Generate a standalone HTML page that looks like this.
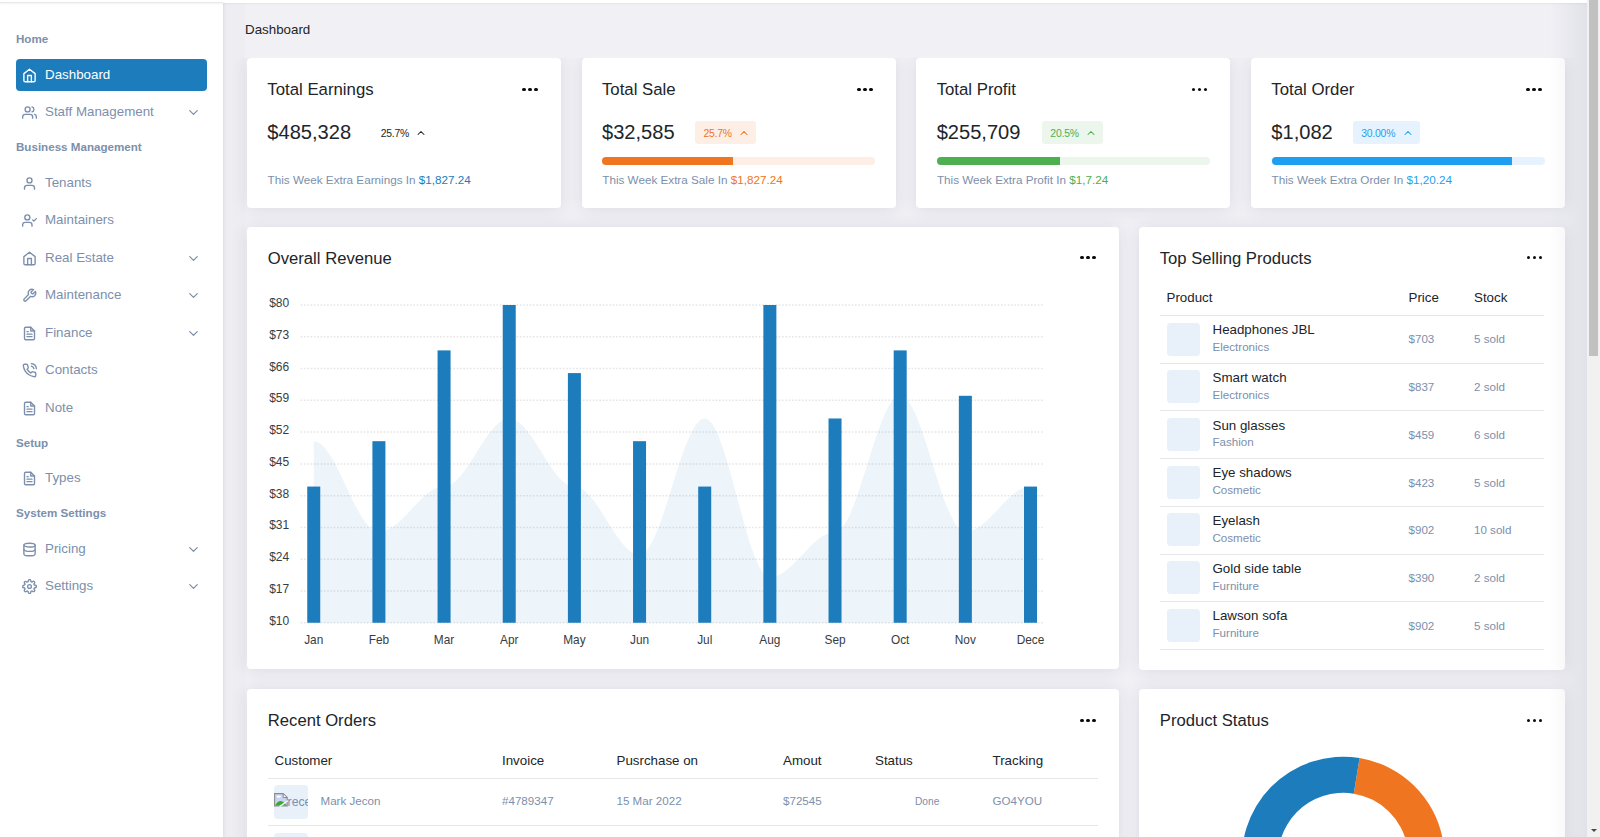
<!DOCTYPE html>
<html lang="en">
<head>
<meta charset="utf-8">
<title>Dashboard</title>
<style>
*{box-sizing:border-box;margin:0;padding:0}
html,body{width:1600px;height:837px;overflow:hidden}
body{background:#f0f0f5;font-family:"Liberation Sans",Arial,sans-serif;color:#2a3547;position:relative;-webkit-font-smoothing:antialiased}
svg{display:block}
.abs{position:absolute}

/* top strip */
#topbar{position:absolute;left:0;top:0;width:1600px;height:3px;background:#fff;box-shadow:0 1px 2px rgba(0,0,0,.05);z-index:5}

/* sidebar */
#sidebar{position:absolute;left:0;top:0;width:223.3px;height:837px;background:#fff;box-shadow:1px 0 3px rgba(60,60,90,.10);z-index:4}
#topline{position:absolute;left:0;top:2.2px;width:223.3px;height:1px;background:#e9e9e9;z-index:6}
.sec{position:absolute;left:16px;font-size:11.6px;font-weight:700;color:#7c8fac;line-height:14px;white-space:nowrap}
.nav{position:absolute;left:16px;width:191px;height:31.5px;border-radius:4px;color:#7c8fac;font-size:13.35px;line-height:31.5px;white-space:nowrap}
.nav.active{background:#1c7cbc;color:#fff}
.nav svg.ic{position:absolute;left:5.6px;top:8.7px;width:15px;height:15px;fill:none;stroke:currentColor;stroke-width:2.2;stroke-linecap:round;stroke-linejoin:round}
.nav span{position:absolute;left:29px;top:0}
.nav svg.chev{position:absolute;left:170.3px;top:8.9px;width:15px;height:15px;fill:none;stroke:currentColor;stroke-width:2;stroke-linecap:round;stroke-linejoin:round}

/* main */
#lband{position:absolute;left:223px;top:3px;width:22px;height:834px;background:rgba(0,0,30,.01)}
#crumb{position:absolute;left:245px;top:22px;font-size:13.35px;line-height:16px;color:#212529}
.card{position:absolute;background:#fff;border-radius:4px;box-shadow:0 1px 17px rgba(40,45,58,.10)}
.ctitle{position:absolute;left:20.3px;font-size:16.8px;line-height:20px;color:#212529;white-space:nowrap}
#rev .ctitle,#top .ctitle,#orders .ctitle,#status .ctitle{font-size:16.65px;left:20.8px}
.dots{position:absolute;width:16px;height:4px}
.dots i{position:absolute;top:0;width:3.5px;height:3.5px;border-radius:50%;background:#0b0b0b}
.dots i:nth-child(1){left:.2px}.dots i:nth-child(2){left:6.2px}.dots i:nth-child(3){left:12.2px}

.stat{clip-path:inset(0 -40px -40px -40px)}
.stat .val{position:absolute;left:20.3px;top:61.6px;font-size:20.1px;line-height:24px;color:#212529;white-space:nowrap}
.stat .badge{position:absolute;top:63px;height:23px;border-radius:3px;font-size:10.4px;line-height:25px;padding-left:8.2px;white-space:nowrap;letter-spacing:-.2px}
.stat .badge svg{position:absolute;top:5.6px;width:12px;height:12px;fill:none;stroke:currentColor;stroke-width:2.1;stroke-linecap:round;stroke-linejoin:round}
.stat .bar{position:absolute;left:20.5px;top:99px;width:273px;height:8px;border-radius:4px;overflow:hidden}
.stat .bar b{position:absolute;left:0;top:0;height:8px;display:block}
.stat .foot{position:absolute;left:20.6px;top:114.5px;font-size:11.7px;line-height:14px;color:#7c8fac;white-space:nowrap}


/* tables */
.th{position:absolute;font-size:13.33px;line-height:16px;color:#212529;white-space:nowrap}
.hr{position:absolute;left:21px;height:1px;background:#e7e7e9}
.thumb{position:absolute;width:33px;height:33px;border-radius:3.5px;background:#e8f1f9;overflow:hidden}
.pn{position:absolute;left:73.5px;font-size:13.33px;line-height:16px;color:#212529;white-space:nowrap}
.pc{position:absolute;left:73.5px;font-size:11.6px;line-height:14px;color:#7c8fac;white-space:nowrap}
.td{position:absolute;font-size:11.6px;line-height:14px;color:#7c8fac;white-space:nowrap}
/* scrollbar */
#sb{position:absolute;left:1587.4px;top:0;width:12.6px;height:837px;background:#f1f1f1;z-index:10}
#sb .thumbv{position:absolute;left:1.7px;top:0;width:8.9px;height:356px;background:#c1c1c1}
#sb .arr{position:absolute;left:3.8px;top:828.7px;width:0;height:0;border-left:3px solid transparent;border-right:3px solid transparent;border-top:3.5px solid #4a4a4a}
#rshade{position:absolute;left:1549px;top:3px;width:38.5px;height:834px;background:linear-gradient(to right,rgba(30,40,50,0),rgba(30,40,50,.07));z-index:9;pointer-events:none}
</style>
</head>
<body>
<div id="topbar"></div>
<div id="topline"></div>

<div id="sidebar">
  <div class="sec" style="top:32px">Home</div>
  <div class="nav active" style="top:59px">
    <svg class="ic" viewBox="0 0 24 24"><path d="M3 9l9-7 9 7v11a2 2 0 0 1-2 2H5a2 2 0 0 1-2-2z"/><polyline points="9 22 9 12 15 12 15 22"/></svg>
    <span>Dashboard</span>
  </div>
  <div class="nav" style="top:96px">
    <svg class="ic" viewBox="0 0 24 24"><path d="M17 21v-2a4 4 0 0 0-4-4H5a4 4 0 0 0-4 4v2"/><circle cx="9" cy="7" r="4"/><path d="M23 21v-2a4 4 0 0 0-3-3.87"/><path d="M16 3.13a4 4 0 0 1 0 7.75"/></svg>
    <span>Staff Management</span>
    <svg class="chev" viewBox="0 0 24 24"><polyline points="6 9 12 15 18 9"/></svg>
  </div>
  <div class="sec" style="top:140px">Business Management</div>
  <div class="nav" style="top:167px">
    <svg class="ic" viewBox="0 0 24 24"><path d="M20 21v-2a4 4 0 0 0-4-4H8a4 4 0 0 0-4 4v2"/><circle cx="12" cy="7" r="4"/></svg>
    <span>Tenants</span>
  </div>
  <div class="nav" style="top:204px">
    <svg class="ic" viewBox="0 0 24 24"><path d="M16 21v-2a4 4 0 0 0-4-4H5a4 4 0 0 0-4 4v2"/><circle cx="8.5" cy="7" r="4"/><polyline points="17 11 19 13 23 9"/></svg>
    <span>Maintainers</span>
  </div>
  <div class="nav" style="top:242px">
    <svg class="ic" viewBox="0 0 24 24"><path d="M3 9l9-7 9 7v11a2 2 0 0 1-2 2H5a2 2 0 0 1-2-2z"/><polyline points="9 22 9 12 15 12 15 22"/></svg>
    <span>Real Estate</span>
    <svg class="chev" viewBox="0 0 24 24"><polyline points="6 9 12 15 18 9"/></svg>
  </div>
  <div class="nav" style="top:279px">
    <svg class="ic" viewBox="0 0 24 24"><path d="M14.7 6.3a1 1 0 0 0 0 1.4l1.6 1.6a1 1 0 0 0 1.4 0l3.77-3.77a6 6 0 0 1-7.94 7.94l-6.91 6.91a2.12 2.12 0 0 1-3-3l6.91-6.91a6 6 0 0 1 7.94-7.94l-3.76 3.76z"/></svg>
    <span>Maintenance</span>
    <svg class="chev" viewBox="0 0 24 24"><polyline points="6 9 12 15 18 9"/></svg>
  </div>
  <div class="nav" style="top:317px">
    <svg class="ic" viewBox="0 0 24 24"><path d="M14 2H6a2 2 0 0 0-2 2v16a2 2 0 0 0 2 2h12a2 2 0 0 0 2-2V8z"/><polyline points="14 2 14 8 20 8"/><line x1="16" y1="13" x2="8" y2="13"/><line x1="16" y1="17" x2="8" y2="17"/><polyline points="10 9 9 9 8 9"/></svg>
    <span>Finance</span>
    <svg class="chev" viewBox="0 0 24 24"><polyline points="6 9 12 15 18 9"/></svg>
  </div>
  <div class="nav" style="top:354px">
    <svg class="ic" viewBox="0 0 24 24"><path d="M15.05 5A5 5 0 0 1 19 8.95M15.05 1A9 9 0 0 1 23 8.94m-1 7.98v3a2 2 0 0 1-2.18 2 19.79 19.79 0 0 1-8.63-3.07 19.5 19.5 0 0 1-6-6 19.79 19.79 0 0 1-3.07-8.67A2 2 0 0 1 4.11 2h3a2 2 0 0 1 2 1.72 12.84 12.84 0 0 0 .7 2.81 2 2 0 0 1-.45 2.11L8.09 9.91a16 16 0 0 0 6 6l1.27-1.27a2 2 0 0 1 2.11-.45 12.84 12.84 0 0 0 2.81.7A2 2 0 0 1 22 16.92z"/></svg>
    <span>Contacts</span>
  </div>
  <div class="nav" style="top:392px">
    <svg class="ic" viewBox="0 0 24 24"><path d="M14 2H6a2 2 0 0 0-2 2v16a2 2 0 0 0 2 2h12a2 2 0 0 0 2-2V8z"/><polyline points="14 2 14 8 20 8"/><line x1="16" y1="13" x2="8" y2="13"/><line x1="16" y1="17" x2="8" y2="17"/><polyline points="10 9 9 9 8 9"/></svg>
    <span>Note</span>
  </div>
  <div class="sec" style="top:436px">Setup</div>
  <div class="nav" style="top:462px">
    <svg class="ic" viewBox="0 0 24 24"><path d="M14 2H6a2 2 0 0 0-2 2v16a2 2 0 0 0 2 2h12a2 2 0 0 0 2-2V8z"/><polyline points="14 2 14 8 20 8"/><line x1="16" y1="13" x2="8" y2="13"/><line x1="16" y1="17" x2="8" y2="17"/><polyline points="10 9 9 9 8 9"/></svg>
    <span>Types</span>
  </div>
  <div class="sec" style="top:506px">System Settings</div>
  <div class="nav" style="top:533px">
    <svg class="ic" viewBox="0 0 24 24"><ellipse cx="12" cy="5" rx="9" ry="3"/><path d="M21 12c0 1.66-4 3-9 3s-9-1.34-9-3"/><path d="M3 5v14c0 1.66 4 3 9 3s9-1.34 9-3V5"/></svg>
    <span>Pricing</span>
    <svg class="chev" viewBox="0 0 24 24"><polyline points="6 9 12 15 18 9"/></svg>
  </div>
  <div class="nav" style="top:570px">
    <svg class="ic" viewBox="0 0 24 24"><circle cx="12" cy="12" r="3"/><path d="M19.4 15a1.65 1.65 0 0 0 .33 1.82l.06.06a2 2 0 0 1 0 2.83 2 2 0 0 1-2.83 0l-.06-.06a1.65 1.65 0 0 0-1.82-.33 1.65 1.65 0 0 0-1 1.51V21a2 2 0 0 1-2 2 2 2 0 0 1-2-2v-.09A1.65 1.65 0 0 0 9 19.4a1.65 1.65 0 0 0-1.82.33l-.06.06a2 2 0 0 1-2.83 0 2 2 0 0 1 0-2.83l.06-.06a1.65 1.65 0 0 0 .33-1.82 1.65 1.65 0 0 0-1.51-1H3a2 2 0 0 1-2-2 2 2 0 0 1 2-2h.09A1.65 1.65 0 0 0 4.6 9a1.65 1.65 0 0 0-.33-1.82l-.06-.06a2 2 0 0 1 0-2.83 2 2 0 0 1 2.83 0l.06.06a1.65 1.65 0 0 0 1.82.33H9a1.65 1.65 0 0 0 1-1.51V3a2 2 0 0 1 2-2 2 2 0 0 1 2 2v.09a1.65 1.65 0 0 0 1 1.51 1.65 1.65 0 0 0 1.82-.33l.06-.06a2 2 0 0 1 2.83 0 2 2 0 0 1 0 2.83l-.06.06a1.65 1.65 0 0 0-.33 1.82V9a1.65 1.65 0 0 0 1.51 1H21a2 2 0 0 1 2 2 2 2 0 0 1-2 2h-.09a1.65 1.65 0 0 0-1.51 1z"/></svg>
    <span>Settings</span>
    <svg class="chev" viewBox="0 0 24 24"><polyline points="6 9 12 15 18 9"/></svg>
  </div>
</div>

<div id="lband"></div>
<div id="crumb">Dashboard</div>

<!-- STAT CARDS -->
<div class="card stat" style="left:247px;top:58px;width:314px;height:150px">
  <div class="ctitle" style="top:22px">Total Earnings</div>
  <div class="dots" style="left:275.2px;top:29.5px"><i></i><i></i><i></i></div>
  <div class="val">$485,328</div>
  <div class="badge" style="left:125.5px;width:60px;color:#212529">25.7%<svg style="left:42.4px" viewBox="0 0 24 24"><polyline points="18 15 12 9 6 15"/></svg></div>
  <div class="foot">This Week Extra Earnings In <span style="color:#1c7cbc">$1,827.24</span></div>
</div>
<div class="card stat" style="left:581.67px;top:58px;width:314px;height:150px">
  <div class="ctitle" style="top:22px">Total Sale</div>
  <div class="dots" style="left:275.2px;top:29.5px"><i></i><i></i><i></i></div>
  <div class="val">$32,585</div>
  <div class="badge" style="left:113.6px;width:60.75px;background:#fdefe6;color:#f07521">25.7%<svg style="left:43.2px" viewBox="0 0 24 24"><polyline points="18 15 12 9 6 15"/></svg></div>
  <div class="bar" style="background:#fdefe6"><b style="width:130.8px;background:#f07521"></b></div>
  <div class="foot">This Week Extra Sale In <span style="color:#f07521">$1,827.24</span></div>
</div>
<div class="card stat" style="left:916.33px;top:58px;width:314px;height:150px">
  <div class="ctitle" style="top:22px">Total Profit</div>
  <div class="dots" style="left:275.2px;top:29.5px"><i></i><i></i><i></i></div>
  <div class="val">$255,709</div>
  <div class="badge" style="left:125.8px;width:60.5px;background:#ecf6ed;color:#4caf50">20.5%<svg style="left:43px" viewBox="0 0 24 24"><polyline points="18 15 12 9 6 15"/></svg></div>
  <div class="bar" style="background:#ecf6ed"><b style="width:122.8px;background:#4caf50"></b></div>
  <div class="foot">This Week Extra Profit In <span style="color:#4caf50">$1,7.24</span></div>
</div>
<div class="card stat" style="left:1251px;top:58px;width:314px;height:150px">
  <div class="ctitle" style="top:22px">Total Order</div>
  <div class="dots" style="left:275.2px;top:29.5px"><i></i><i></i><i></i></div>
  <div class="val">$1,082</div>
  <div class="badge" style="left:102px;width:67px;background:#e6f3fe;color:#1e9ff2">30.00%<svg style="left:49px" viewBox="0 0 24 24"><polyline points="18 15 12 9 6 15"/></svg></div>
  <div class="bar" style="background:#e6f3fe"><b style="width:240px;background:#1e9ff2"></b></div>
  <div class="foot">This Week Extra Order In <span style="color:#1e9ff2">$1,20.24</span></div>
</div>

<!-- OVERALL REVENUE -->
<div class="card" id="rev" style="left:247px;top:227px;width:872px;height:442px">
  <div class="ctitle" style="top:22px">Overall Revenue</div>
  <div class="dots" style="left:833.2px;top:28.7px"><i></i><i></i><i></i></div>
  <svg id="chart" class="abs" style="left:0;top:0" width="872" height="441" viewBox="0 0 872 441" font-family="Liberation Sans, Arial, sans-serif"><!--CHART-->
<line x1="53.60" y1="395.75" x2="796.60" y2="395.75" stroke="#e6e6e6" stroke-width="1.5" stroke-dasharray="1.66 1.66"/>
<line x1="53.60" y1="363.98" x2="796.60" y2="363.98" stroke="#e6e6e6" stroke-width="1.5" stroke-dasharray="1.66 1.66"/>
<line x1="53.60" y1="332.20" x2="796.60" y2="332.20" stroke="#e6e6e6" stroke-width="1.5" stroke-dasharray="1.66 1.66"/>
<line x1="53.60" y1="300.42" x2="796.60" y2="300.42" stroke="#e6e6e6" stroke-width="1.5" stroke-dasharray="1.66 1.66"/>
<line x1="53.60" y1="268.65" x2="796.60" y2="268.65" stroke="#e6e6e6" stroke-width="1.5" stroke-dasharray="1.66 1.66"/>
<line x1="53.60" y1="236.88" x2="796.60" y2="236.88" stroke="#e6e6e6" stroke-width="1.5" stroke-dasharray="1.66 1.66"/>
<line x1="53.60" y1="205.10" x2="796.60" y2="205.10" stroke="#e6e6e6" stroke-width="1.5" stroke-dasharray="1.66 1.66"/>
<line x1="53.60" y1="173.32" x2="796.60" y2="173.32" stroke="#e6e6e6" stroke-width="1.5" stroke-dasharray="1.66 1.66"/>
<line x1="53.60" y1="141.55" x2="796.60" y2="141.55" stroke="#e6e6e6" stroke-width="1.5" stroke-dasharray="1.66 1.66"/>
<line x1="53.60" y1="109.77" x2="796.60" y2="109.77" stroke="#e6e6e6" stroke-width="1.5" stroke-dasharray="1.66 1.66"/>
<line x1="53.60" y1="78.00" x2="796.60" y2="78.00" stroke="#e6e6e6" stroke-width="1.5" stroke-dasharray="1.66 1.66"/>
<path d="M66.75 214.18 C89.56 214.18 109.10 304.96 131.91 304.96 C154.72 304.96 174.26 259.57 197.07 259.57 C219.88 259.57 239.42 191.48 262.23 191.48 C285.04 191.48 304.58 259.57 327.39 259.57 C350.20 259.57 369.74 327.66 392.55 327.66 C415.36 327.66 434.90 191.48 457.71 191.48 C480.52 191.48 500.06 350.36 522.87 350.36 C545.68 350.36 565.22 304.96 588.03 304.96 C610.84 304.96 630.38 168.79 653.19 168.79 C676.00 168.79 695.54 304.96 718.35 304.96 C741.16 304.96 760.70 259.57 783.51 259.57 L783.51 395.75 L66.75 395.75Z" fill="#1c7cbc" fill-opacity="0.08"/>
<rect x="60.25" y="259.57" width="13" height="136.18" fill="#1c7cbc"/>
<rect x="125.41" y="214.18" width="13" height="181.57" fill="#1c7cbc"/>
<rect x="190.57" y="123.39" width="13" height="272.36" fill="#1c7cbc"/>
<rect x="255.73" y="78.00" width="13" height="317.75" fill="#1c7cbc"/>
<rect x="320.89" y="146.09" width="13" height="249.66" fill="#1c7cbc"/>
<rect x="386.05" y="214.18" width="13" height="181.57" fill="#1c7cbc"/>
<rect x="451.21" y="259.57" width="13" height="136.18" fill="#1c7cbc"/>
<rect x="516.37" y="78.00" width="13" height="317.75" fill="#1c7cbc"/>
<rect x="581.53" y="191.48" width="13" height="204.27" fill="#1c7cbc"/>
<rect x="646.69" y="123.39" width="13" height="272.36" fill="#1c7cbc"/>
<rect x="711.85" y="168.79" width="13" height="226.96" fill="#1c7cbc"/>
<rect x="777.01" y="259.57" width="13" height="136.18" fill="#1c7cbc"/>
<text x="42.20" y="397.75" text-anchor="end" font-size="12" fill="#373d3f">$10</text>
<text x="42.20" y="365.98" text-anchor="end" font-size="12" fill="#373d3f">$17</text>
<text x="42.20" y="334.20" text-anchor="end" font-size="12" fill="#373d3f">$24</text>
<text x="42.20" y="302.42" text-anchor="end" font-size="12" fill="#373d3f">$31</text>
<text x="42.20" y="270.65" text-anchor="end" font-size="12" fill="#373d3f">$38</text>
<text x="42.20" y="238.88" text-anchor="end" font-size="12" fill="#373d3f">$45</text>
<text x="42.20" y="207.10" text-anchor="end" font-size="12" fill="#373d3f">$52</text>
<text x="42.20" y="175.32" text-anchor="end" font-size="12" fill="#373d3f">$59</text>
<text x="42.20" y="143.55" text-anchor="end" font-size="12" fill="#373d3f">$66</text>
<text x="42.20" y="111.77" text-anchor="end" font-size="12" fill="#373d3f">$73</text>
<text x="42.20" y="80.00" text-anchor="end" font-size="12" fill="#373d3f">$80</text>
<text x="66.75" y="416.60" text-anchor="middle" font-size="11.85" fill="#373d3f">Jan</text>
<text x="131.91" y="416.60" text-anchor="middle" font-size="11.85" fill="#373d3f">Feb</text>
<text x="197.07" y="416.60" text-anchor="middle" font-size="11.85" fill="#373d3f">Mar</text>
<text x="262.23" y="416.60" text-anchor="middle" font-size="11.85" fill="#373d3f">Apr</text>
<text x="327.39" y="416.60" text-anchor="middle" font-size="11.85" fill="#373d3f">May</text>
<text x="392.55" y="416.60" text-anchor="middle" font-size="11.85" fill="#373d3f">Jun</text>
<text x="457.71" y="416.60" text-anchor="middle" font-size="11.85" fill="#373d3f">Jul</text>
<text x="522.87" y="416.60" text-anchor="middle" font-size="11.85" fill="#373d3f">Aug</text>
<text x="588.03" y="416.60" text-anchor="middle" font-size="11.85" fill="#373d3f">Sep</text>
<text x="653.19" y="416.60" text-anchor="middle" font-size="11.85" fill="#373d3f">Oct</text>
<text x="718.35" y="416.60" text-anchor="middle" font-size="11.85" fill="#373d3f">Nov</text>
<text x="783.51" y="416.60" text-anchor="middle" font-size="11.85" fill="#373d3f">Dece</text>
<!--/CHART--></svg>
</div>

<!-- TOP SELLING -->
<div class="card" id="top" style="left:1139px;top:227px;width:426px;height:443px">
  <div class="ctitle" style="top:22px">Top Selling Products</div>
  <div class="dots" style="left:387.5px;top:28.7px"><i></i><i></i><i></i></div>
  <!--TOP-->
<div class="th" style="left:27.5px;top:63.3px">Product</div><div class="th" style="left:269.5px;top:63.3px">Price</div><div class="th" style="left:335px;top:63.3px">Stock</div>
  <div class="hr" style="top:88.0px;width:383.5px"></div>
  <div class="thumb" style="left:27.5px;top:95.6px"></div><div class="pn" style="top:95.1px">Headphones JBL</div><div class="pc" style="top:113.0px">Electronics</div><div class="td" style="left:269.5px;top:105.4px">$703</div><div class="td" style="left:335px;top:105.4px">5 sold</div><div class="hr" style="top:135.7px;width:383.5px"></div>
  <div class="thumb" style="left:27.5px;top:143.3px"></div><div class="pn" style="top:142.8px">Smart watch</div><div class="pc" style="top:160.7px">Electronics</div><div class="td" style="left:269.5px;top:153.1px">$837</div><div class="td" style="left:335px;top:153.1px">2 sold</div><div class="hr" style="top:183.4px;width:383.5px"></div>
  <div class="thumb" style="left:27.5px;top:191.0px"></div><div class="pn" style="top:190.5px">Sun glasses</div><div class="pc" style="top:208.4px">Fashion</div><div class="td" style="left:269.5px;top:200.8px">$459</div><div class="td" style="left:335px;top:200.8px">6 sold</div><div class="hr" style="top:231.1px;width:383.5px"></div>
  <div class="thumb" style="left:27.5px;top:238.7px"></div><div class="pn" style="top:238.2px">Eye shadows</div><div class="pc" style="top:256.1px">Cosmetic</div><div class="td" style="left:269.5px;top:248.5px">$423</div><div class="td" style="left:335px;top:248.5px">5 sold</div><div class="hr" style="top:278.8px;width:383.5px"></div>
  <div class="thumb" style="left:27.5px;top:286.4px"></div><div class="pn" style="top:285.9px">Eyelash</div><div class="pc" style="top:303.8px">Cosmetic</div><div class="td" style="left:269.5px;top:296.2px">$902</div><div class="td" style="left:335px;top:296.2px">10 sold</div><div class="hr" style="top:326.5px;width:383.5px"></div>
  <div class="thumb" style="left:27.5px;top:334.1px"></div><div class="pn" style="top:333.6px">Gold side table</div><div class="pc" style="top:351.5px">Furniture</div><div class="td" style="left:269.5px;top:343.9px">$390</div><div class="td" style="left:335px;top:343.9px">2 sold</div><div class="hr" style="top:374.2px;width:383.5px"></div>
  <div class="thumb" style="left:27.5px;top:381.8px"></div><div class="pn" style="top:381.3px">Lawson sofa</div><div class="pc" style="top:399.2px">Furniture</div><div class="td" style="left:269.5px;top:391.6px">$902</div><div class="td" style="left:335px;top:391.6px">5 sold</div><div class="hr" style="top:421.9px;width:383.5px"></div>
  <!--/TOP-->
</div>

<!-- RECENT ORDERS -->
<div class="card" id="orders" style="left:247px;top:689px;width:872px;height:200px">
  <div class="ctitle" style="top:22px">Recent Orders</div>
  <div class="dots" style="left:833.2px;top:29.5px"><i></i><i></i><i></i></div>
  <!--ORD-->
<div class="th" style="left:27.5px;top:63.5px">Customer</div><div class="th" style="left:255px;top:63.5px">Invoice</div><div class="th" style="left:369.5px;top:63.5px">Pusrchase on</div><div class="th" style="left:536px;top:63.5px">Amout</div><div class="th" style="left:628px;top:63.5px">Status</div><div class="th" style="left:745.5px;top:63.5px">Tracking</div>
  <div class="hr" style="top:89.0px;width:830px"></div>
  <div class="thumb" style="left:27.2px;top:96.3px;width:33.5px;height:33.6px;border-radius:4px"><svg class="abs" style="left:0;top:7.5px" width="14" height="14" viewBox="0 0 14 14"><path d="M0.6 0.6H9.2L13.2 4.6V12.9H0.6Z" fill="#c6d5f6" stroke="#8b8b8b" stroke-width="1.1"/><ellipse cx="4.8" cy="3.6" rx="2.3" ry="1.1" fill="#fff"/><path d="M1.2 12.3C3 9.2 5.5 7.6 7.6 8.2C9.6 8.8 11 10.2 12.6 12.3Z" fill="#3fa52e"/><path d="M9.2 0.6V4.6H13.2Z" fill="#fff" stroke="#8b8b8b" stroke-width="1" stroke-linejoin="round"/><path d="M5.6 13.6L13.8 7.6" stroke="#e8f1f9" stroke-width="1.6"/></svg><span class="abs" style="left:13.4px;top:7.5px;font-size:12.2px;line-height:18px;color:#7c8fac;white-space:nowrap">recent order</span></div>
  <div class="td" style="left:73.5px;top:105.0px">Mark Jecon</div><div class="td" style="left:255px;top:105.0px">#4789347</div><div class="td" style="left:369.5px;top:105.0px">15 Mar 2022</div><div class="td" style="left:536px;top:105.0px">$72545</div><div class="td" style="left:668px;top:105.5px;font-size:10.2px">Done</div><div class="td" style="left:745.5px;top:105.0px">GO4YOU</div>
  <div class="hr" style="top:136.0px;width:830px"></div>
  <div class="thumb" style="left:27.2px;top:144.0px;width:33.5px;height:33.6px;border-radius:4px"></div>
  <!--/ORD-->
</div>

<!-- PRODUCT STATUS -->
<div class="card" id="status" style="left:1139px;top:689px;width:426px;height:200px">
  <div class="ctitle" style="top:22px">Product Status</div>
  <div class="dots" style="left:387.5px;top:29.5px"><i></i><i></i><i></i></div>
  <!--DON-->
<svg class="abs" style="left:0;top:0" width="426" height="200" viewBox="0 0 426 200"><path d="M220.57 69.03 A101.30 101.30 0 0 1 254.85 256.73 L236.80 225.46 A65.20 65.20 0 0 0 214.74 104.66 Z" fill="#f07521"/><path d="M254.85 256.73 A101.30 101.30 0 1 1 220.57 69.03 L214.74 104.66 A65.20 65.20 0 1 0 236.80 225.46 Z" fill="#1c7cbc"/></svg>
  <!--/DON-->
</div>

<div id="rshade"></div>
<div id="sb"><div class="thumbv"></div><div class="arr"></div></div>

</body>
</html>
